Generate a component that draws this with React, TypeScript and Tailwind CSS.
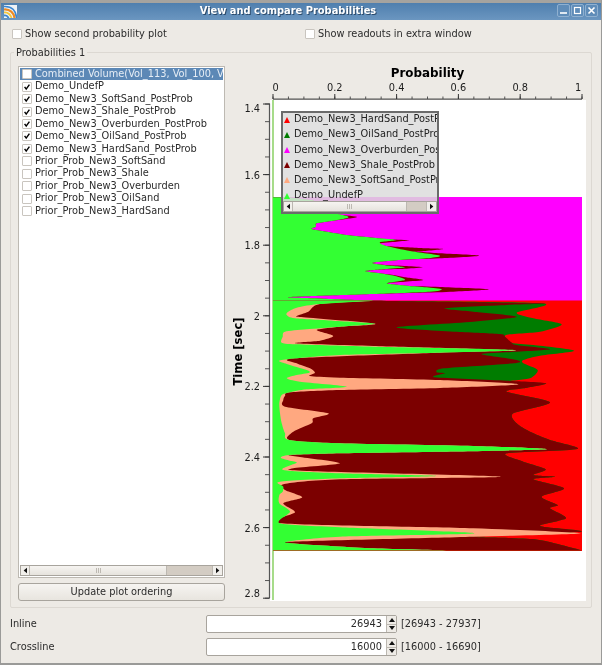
import React from "react";

type P = [number, number];
const z3 = (a: P[]): P[] => a.map(([x, y]) => [240 + x / 3, 190 + y / 3]);
const z4 = (a: P[]): P[] => a.map(([x, y]) => [240 + x / 3, 390 + y / 3]);

function smooth(points: P[], t = 0.13): string {
  let d = `M${points[0][0].toFixed(1)} ${points[0][1].toFixed(1)}`;
  for (let i = 0; i < points.length - 1; i++) {
    const p0 = points[Math.max(i - 1, 0)];
    const p1 = points[i];
    const p2 = points[i + 1];
    const p3 = points[Math.min(i + 2, points.length - 1)];
    const c1: P = [p1[0] + (p2[0] - p0[0]) * t, p1[1] + (p2[1] - p0[1]) * t];
    const c2: P = [p2[0] - (p3[0] - p1[0]) * t, p2[1] - (p3[1] - p1[1]) * t];
    d += `C${c1[0].toFixed(1)} ${c1[1].toFixed(1)} ${c2[0].toFixed(1)} ${c2[1].toFixed(1)} ${p2[0].toFixed(1)} ${p2[1].toFixed(1)}`;
  }
  return d;
}

const L = 273;
const band = (pts: P[]) => {
  const first = pts[0];
  const last = pts[pts.length - 1];
  return `M${L} ${first[1]}L${first[0]} ${first[1]}` + smooth(pts).replace(/^M[^C]*/, "") + `L${L} ${last[1]}Z`;
};

const topGreen: P[] = [[130, 22], [180, 26], [222, 32], [180, 38], [150, 50], [200, 60], [280, 70], [320, 78], [322, 84], [280, 92], [230, 100], [228, 110], [215, 117], [260, 125], [320, 135], [400, 143], [470, 150], [420, 157], [440, 168], [510, 183], [600, 197], [560, 205], [480, 210], [398, 218], [430, 225], [495, 232], [440, 237], [375, 243], [420, 250], [465, 258], [495, 270], [440, 280], [500, 287], [560, 292], [605, 298], [570, 305], [400, 312], [220, 318], [142, 322], [250, 326], [405, 332]];
const topMaroon: P[] = [[130, 22], [180, 26], [222, 32], [180, 38], [150, 50], [200, 60], [280, 72], [350, 80], [322, 86], [280, 92], [230, 100], [228, 110], [215, 117], [260, 125], [320, 135], [400, 143], [450, 148], [508, 151], [470, 155], [420, 160], [440, 168], [540, 174], [610, 177], [540, 184], [510, 183], [600, 190], [718, 197], [600, 205], [480, 210], [398, 218], [430, 224], [500, 228], [548, 232], [500, 236], [440, 238], [375, 243], [420, 250], [465, 256], [495, 262], [550, 270], [495, 275], [440, 280], [500, 287], [600, 291], [748, 298], [640, 305], [400, 312], [220, 318], [142, 322], [250, 326], [405, 332]];

const green: P[] = [
  ...z3([[405, 332], [240, 342], [175, 352], [145, 365], [140, 375], [165, 385], [280, 392], [405, 401], [300, 410], [200, 418], [135, 425], [128, 440], [125, 458], [170, 463], [400, 470], [700, 476], [825, 481], [600, 488], [300, 495], [125, 510], [140, 522], [200, 540], [208, 548], [170, 555], [140, 565], [180, 575], [320, 590], [200, 598]]),
  ...z4([[150, 7], [125, 15], [118, 40], [120, 70], [125, 100], [135, 130], [148, 150], [300, 160], [700, 168], [920, 178], [600, 185], [300, 190], [150, 195], [122, 203], [150, 212], [170, 218], [130, 240], [300, 250], [590, 258], [300, 265], [120, 275], [130, 290], [128, 305], [118, 315], [118, 340], [150, 365], [120, 400], [300, 412], [705, 430], [300, 440], [140, 455], [180, 462], [400, 475], [635, 481]]),
];
const peach: P[] = [
  ...z3([[405, 332], [240, 342], [205, 365], [170, 378], [190, 382], [405, 401], [300, 410], [230, 420], [280, 438], [240, 452], [168, 460], [400, 468], [825, 481], [600, 488], [165, 505], [170, 520], [210, 535], [225, 548], [210, 558], [300, 563], [600, 570], [835, 583], [600, 594], [300, 600]]),
  ...z4([[150, 7], [135, 18], [130, 30], [135, 50], [265, 70], [220, 85], [215, 100], [160, 125], [148, 150], [300, 160], [700, 168], [920, 178], [600, 185], [300, 190], [150, 195], [175, 200], [300, 220], [160, 235], [200, 243], [783, 260], [300, 268], [133, 282], [135, 300], [187, 322], [130, 340], [165, 367], [125, 400], [700, 415], [1022, 430], [700, 440], [150, 455], [180, 462], [400, 475], [635, 481]]),
];
const maroon: P[] = [
  ...z3([[405, 332], [905, 340], [800, 345], [615, 355], [700, 365], [830, 380], [700, 395], [470, 412], [650, 425], [780, 432], [795, 440], [815, 458], [830, 465], [930, 478], [800, 487], [725, 493], [830, 510], [820, 520], [612, 535], [590, 547], [615, 550], [585, 562], [800, 572], [918, 580], [850, 595]]),
  ...z4([[800, 5], [930, 37], [820, 70], [830, 100], [870, 125], [930, 150], [1012, 177], [800, 190], [850, 215], [917, 238], [880, 255], [945, 260], [880, 268], [972, 295], [905, 320], [953, 345], [930, 355], [978, 385], [900, 408], [1022, 425], [700, 440], [885, 448], [1025, 481]]),
];
const darkGreen: P[] = [
  ...z3([[405, 332], [905, 340], [830, 368], [880, 385], [965, 403], [900, 425], [798, 435], [815, 458], [880, 465], [1003, 482], [900, 497], [850, 510], [850, 520], [893, 540], [870, 565], [800, 575], [918, 580], [850, 595]]),
  ...z4([[800, 5], [930, 37], [820, 70], [830, 100], [870, 125], [930, 150], [1012, 177], [800, 190], [850, 215], [917, 238], [880, 255], [945, 260], [880, 268], [972, 295], [905, 320], [953, 345], [930, 355], [978, 385], [900, 408], [1022, 425], [700, 440], [885, 448], [1025, 481]]),
];

const xMajor = [0, 0.2, 0.4, 0.6, 0.8, 1];
const xMinor = Array.from({ length: 21 }, (_, i) => i * 0.05);
const yMajor = [1.4, 1.6, 1.8, 2, 2.2, 2.4, 2.6, 2.8];
const yMinor = Array.from({ length: 29 }, (_, i) => 1.4 + i * 0.05);
const px = (p: number) => 273 + 309 * p;
const py = (t: number) => 104 + (t - 1.4) * 353;
const yLabel = (t: number) => (t === 1.4 ? 112 : t === 2.8 ? 597 : py(t) + 4);
const xLabel = (p: number) => (p === 0 ? 275.5 : p === 1 ? 578 : px(p));

function Chart() {
  return (
    <svg viewBox="232 62 358 540" width="358" height="540" className="block shrink-0" style={{ fontFamily: '"DejaVu Sans", sans-serif' }}>
      <rect x="270" y="100" width="316" height="501" fill="#ffffff" />
      <line x1="273" y1="100" x2="273" y2="600" stroke="#6cc43c" strokeWidth="1.2" />
      <rect x="273" y="197" width="309" height="105" fill="#ff00ff" />
      <rect x="273" y="300.5" width="309" height="250.5" fill="#ff0000" />
      <path d={band(z3(topMaroon))} fill="#7c0000" />
      <path d={band(z3(topGreen))} fill="#33ff33" />
      <path d={band(darkGreen)} fill="#007c00" />
      <path d={band(maroon)} fill="#7c0000" />
      <path d={band(peach)} fill="#ffa880" />
      <path d={band(green)} fill="#33ff33" />
      <text x="427.5" y="77" textAnchor="middle" fontWeight="700" fontSize="11.9" fill="#000">Probability</text>
      <line x1="273" y1="99.2" x2="582" y2="99.2" stroke="#555" strokeWidth="1.2" />
      {xMinor.map((p) => (
        <line key={p} x1={px(p)} x2={px(p)} y1="96.5" y2="99" stroke="#444" strokeWidth="0.9" />
      ))}
      {xMajor.map((p) => (
        <g key={p}>
          <line x1={px(p)} x2={px(p)} y1="94" y2="99" stroke="#333" strokeWidth="1" />
          <text x={xLabel(p)} y="90.5" textAnchor="middle" fontSize="9.8" fill="#1c1c1c">{p}</text>
        </g>
      ))}
      <line x1="269.5" y1="103.5" x2="269.5" y2="598" stroke="#555" strokeWidth="1.2" />
      {yMinor.map((t, i) => (
        <line key={i} x1="265" x2="269.5" y1={py(t)} y2={py(t)} stroke="#444" strokeWidth="0.9" />
      ))}
      {yMajor.map((t) => (
        <g key={t}>
          <line x1="263" x2="269.5" y1={py(t)} y2={py(t)} stroke="#333" strokeWidth="1" />
          <text x="260" y={yLabel(t)} textAnchor="end" fontSize="9.8" fill="#1c1c1c">{t}</text>
        </g>
      ))}
      <text transform="translate(241.5 351.5) rotate(-90)" textAnchor="middle" fontWeight="700" fontSize="11.6" fill="#000">Time [sec]</text>
    </svg>
  );
}

function Check() {
  return (
    <svg viewBox="0 0 10 10" className="w-[10px] h-[10px]">
      <path d="M2 4.8L4 7.6L8 2" fill="none" stroke="#000" strokeWidth="1.8" />
    </svg>
  );
}

function Box({ checked }: { checked?: boolean }) {
  return (
    <span className="w-[10px] h-[10px] shrink-0 flex items-center justify-center bg-white border border-[#c9c5bf] rounded-[1px]">
      {checked && <Check />}
    </span>
  );
}

function Arrow({ dir }: { dir: "l" | "r" }) {
  return (
    <svg viewBox="0 0 6 8" className="w-[4px] h-[7px]">
      <path d={dir === "l" ? "M6 0V8L1 4Z" : "M0 0V8L5 4Z"} fill="#111" />
    </svg>
  );
}

function HScroll({ thumb }: { thumb: string }) {
  return (
    <div className="flex h-[11px] shrink-0 border border-[#a8a49d] bg-[#d3ccc3]">
      <div className="w-[9px] shrink-0 bg-[#f1efeb] border-r border-[#bcb8b1] flex items-center justify-center"><Arrow dir="l" /></div>
      <div className={`${thumb} shrink-0 bg-gradient-to-b from-[#f6f4f1] to-[#e6e3dd] border-r border-[#bcb8b1] flex items-center justify-center`}>
        <div className="w-[5px] h-[5px] bg-[repeating-linear-gradient(90deg,#bdb9b2_0,#bdb9b2_1px,transparent_1px,transparent_2px)]" />
      </div>
      <div className="flex-1" />
      <div className="w-[10px] shrink-0 bg-[#f1efeb] border-l border-[#bcb8b1] flex items-center justify-center"><Arrow dir="r" /></div>
    </div>
  );
}

const items: [string, boolean][] = [
  ["Demo_UndefP", true],
  ["Demo_New3_SoftSand_PostProb", true],
  ["Demo_New3_Shale_PostProb", true],
  ["Demo_New3_Overburden_PostProb", true],
  ["Demo_New3_OilSand_PostProb", true],
  ["Demo_New3_HardSand_PostProb", true],
  ["Prior_Prob_New3_SoftSand", false],
  ["Prior_Prob_New3_Shale", false],
  ["Prior_Prob_New3_Overburden", false],
  ["Prior_Prob_New3_OilSand", false],
  ["Prior_Prob_New3_HardSand", false],
];

const legend: [string, string][] = [
  ["#ff0000", "Demo_New3_HardSand_PostProb"],
  ["#007c00", "Demo_New3_OilSand_PostProb"],
  ["#ff00ff", "Demo_New3_Overburden_PostProb"],
  ["#7c0000", "Demo_New3_Shale_PostProb"],
  ["#ffa880", "Demo_New3_SoftSand_PostProb"],
  ["#33ff33", "Demo_UndefP"],
];

function Legend() {
  return (
    <div className="absolute left-[49px] top-[49px] w-[158px] h-[103px] border-2 border-[#6b6b6b] bg-[#dcdcdc]/85 overflow-hidden flex flex-col text-[9.8px]">
      <div className="flex-1 -mt-[1px] overflow-hidden">
        {legend.map(([c, t]) => (
          <div key={t} className="h-[15.2px] flex items-center whitespace-nowrap text-[#222]">
            <svg viewBox="0 0 6 6" className="w-[6px] h-[6px] ml-[1px] mr-[4px] shrink-0"><path d="M3 0L6 6H0Z" fill={c} /></svg>
            <span>{t}</span>
          </div>
        ))}
      </div>
      <HScroll thumb="w-[114px]" />
    </div>
  );
}

function Spin({ value, range, label }: { value: string; range: string; label: string }) {
  return (
    <div className="flex items-center h-[18px]">
      <span className="w-[196px] shrink-0">{label}</span>
      <div className="w-[191px] h-[18px] flex border border-[#a8a49d] rounded-[2px] bg-white">
        <div className="flex-1 text-right pr-[4px] leading-[16px]">{value}</div>
        <div className="w-[10px] shrink-0 flex flex-col border-l border-[#bcb8b1] bg-[#eeebe6]">
          <div className="flex-1 flex items-center justify-center border-b border-[#bcb8b1]">
            <svg viewBox="0 0 6 4" className="w-[6px] h-[4px]"><path d="M3 0L6 4H0Z" fill="#111" /></svg>
          </div>
          <div className="flex-1 flex items-center justify-center">
            <svg viewBox="0 0 6 4" className="w-[6px] h-[4px]"><path d="M0 0H6L3 4Z" fill="#111" /></svg>
          </div>
        </div>
      </div>
      <span className="ml-[4px]">{range}</span>
    </div>
  );
}

export default function App() {
  return (
    <div className="w-[602px] h-[665px] flex flex-col overflow-hidden bg-[#edeae5] text-[9.8px] text-[#2b2b2b] border-x border-b-2 border-[#9a9a98] blur-[0.35px]" style={{ fontFamily: '"DejaVu Sans", sans-serif' }}>
      <div className="h-[3px] -mx-[1px] shrink-0 bg-[#a5a39f]" />
      <div className="h-[17px] -mx-[1px] shrink-0 relative flex items-center justify-center pr-[26px] bg-gradient-to-b from-[#4f7fae] to-[#6b96c0]">
        <svg viewBox="0 0 13 13" className="absolute left-[4px] top-[2px] w-[13px] h-[13px]">
          <rect width="13" height="13" fill="#eef2f6" />
          <path d="M0 1.5C8 1 12 6 12.5 13" fill="none" stroke="#3b86d0" strokeWidth="1.6" />
          <path d="M0 4.5C6 4 10 8 10.5 13" fill="none" stroke="#ee8a22" strokeWidth="2.2" />
          <path d="M0 7.5C4 7 7 10 7.5 13" fill="none" stroke="#f4c63a" strokeWidth="1.8" />
          <path d="M0 10.5C2 10 4 11.5 4.5 13" fill="none" stroke="#3b86d0" strokeWidth="2" />
        </svg>
        <span className="font-bold text-white text-[9.9px] [text-shadow:1px_1px_0_#2c4a6a]">View and compare Probabilities</span>
        <div className="absolute right-[4px] top-[1px] flex gap-[1px]">
          {["min", "max", "close"].map((k) => (
            <div key={k} className="w-[13px] h-[13px] border border-[#8fb0d0] rounded-[2px] bg-[#5f8cb8] flex items-center justify-center">
              <svg viewBox="0 0 9 9" className="w-[9px] h-[9px]">
                {k === "min" && <path d="M1 7H8" stroke="#fff" strokeWidth="1.6" />}
                {k === "max" && <rect x="1.5" y="1.5" width="6" height="6" fill="none" stroke="#fff" strokeWidth="1.2" />}
                {k === "close" && <path d="M1.5 1.5L7.5 7.5M7.5 1.5L1.5 7.5" stroke="#fff" strokeWidth="1.6" />}
              </svg>
            </div>
          ))}
        </div>
      </div>

      <div className="h-[20px] mt-[4px] shrink-0 flex items-center pl-[11px]">
        <div className="w-[293px] flex items-center gap-[3px]"><Box /><span>Show second probability plot</span></div>
        <div className="flex items-center gap-[3px]"><Box /><span>Show readouts in extra window</span></div>
      </div>

      <div className="relative ml-[9px] mt-[8px] w-[582px] h-[556px] shrink-0 border border-[#dcd8d2] rounded-[2px] pt-[13px] pl-[7px] flex">
        <span className="absolute left-[3px] -top-[7px] px-[2px] bg-[#edeae5]">Probabilities 1</span>
        <div className="w-[207px] shrink-0 h-[535px] flex flex-col">
          <div className="flex-1 border border-[#bdb9b2] bg-white p-[1px] flex flex-col">
            <div className="flex-1 overflow-hidden">
              <div className="h-[12.45px] flex items-center bg-[#5c88b6] text-[#e6edf5] whitespace-nowrap overflow-hidden pl-[2px] gap-[3px]">
                <Box /><span>Combined Volume(Vol_113, Vol_100, Vol_101)</span>
              </div>
              {items.map(([t, c]) => (
                <div key={t} className="h-[12.45px] flex items-center whitespace-nowrap pl-[2px] gap-[3px]">
                  <Box checked={c} /><span>{t}</span>
                </div>
              ))}
            </div>
            <HScroll thumb="w-[137px]" />
          </div>
          <button className="mt-[5px] h-[18px] shrink-0 border border-[#a8a49d] rounded-[3px] bg-gradient-to-b from-[#f6f4f1] to-[#e8e5df] text-center">Update plot ordering</button>
        </div>
        <div className="relative ml-[7px] -mt-[4px] h-[540px]">
          <Chart />
          <Legend />
        </div>
      </div>

      <div className="mt-[7px] pl-[9px] flex flex-col gap-[5px]">
        <Spin label="Inline" value="26943" range="[26943 - 27937]" />
        <Spin label="Crossline" value="16000" range="[16000 - 16690]" />
      </div>
    </div>
  );
}
